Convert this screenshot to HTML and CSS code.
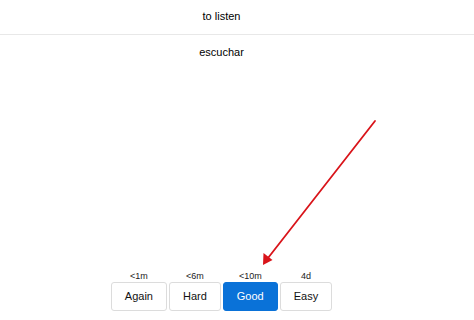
FILE: index.html
```html
<!DOCTYPE html>
<html>
<head>
<meta charset="utf-8">
<link rel="stylesheet" href="styles.css">
</head>
<body>
<div class="page">
  <div class="card">
    <div class="front">to listen</div>
    <div class="answer">escuchar</div>
  </div>
  <div class="bar">
    <div class="ease">
      <span class="due">&lt;1m</span>
      <button class="btn">Again</button>
    </div>
    <div class="ease">
      <span class="due">&lt;6m</span>
      <button class="btn">Hard</button>
    </div>
    <div class="ease">
      <span class="due">&lt;10m</span>
      <button class="btn btn-good">Good</button>
    </div>
    <div class="ease">
      <span class="due">4d</span>
      <button class="btn">Easy</button>
    </div>
  </div>
</div>
<svg class="arrow" width="474" height="320" viewBox="0 0 474 320">
  <line x1="375" y1="121" x2="268" y2="258" stroke="#d9141a" stroke-width="1.8" stroke-linecap="round"/>
  <polygon points="263,265 263.5,253 272.5,260" fill="#d9141a"/>
</svg>
</body>
</html>
```
FILE: styles.css
```css
html, body {
  margin: 0;
  padding: 0;
  background: #ffffff;
}
body {
  font-family: "Liberation Sans", Arial, Helvetica, sans-serif;
  color: #000;
  position: relative;
  width: 474px;
  height: 320px;
  overflow: hidden;
}
.page {
  height: 320px;
  display: flex;
  flex-direction: column;
}
.card {
  flex: 1;
  font-size: 11px;
  line-height: 14px;
}
.front {
  text-align: center;
  padding-top: 9px;
  padding-bottom: 11px;
  border-bottom: 1px solid #e8e8e8;
  width: 474px;
  box-sizing: border-box;
  padding-right: 31px;
}
.answer {
  width: 443px;
  text-align: center;
  padding-top: 10px;
}
.bar {
  width: 443px;
  display: flex;
  justify-content: center;
  gap: 2px;
  padding-bottom: 9px;
}
.ease {
  display: flex;
  flex-direction: column;
  align-items: center;
}
.due {
  font-size: 9px;
  line-height: 11px;
  color: #222;
}
.btn {
  font-family: "Liberation Sans", Arial, Helvetica, sans-serif;
  font-size: 11px;
  line-height: 13px;
  padding: 7px 13px;
  border: 1px solid #dcdcdc;
  border-radius: 3px;
  background: #ffffff;
  color: #111;
  margin: 0;
}
.btn-good {
  background: #0a72d8;
  border-color: #0a72d8;
  color: #ffffff;
}
.arrow {
  position: absolute;
  left: 0;
  top: 0;
  pointer-events: none;
}
```
